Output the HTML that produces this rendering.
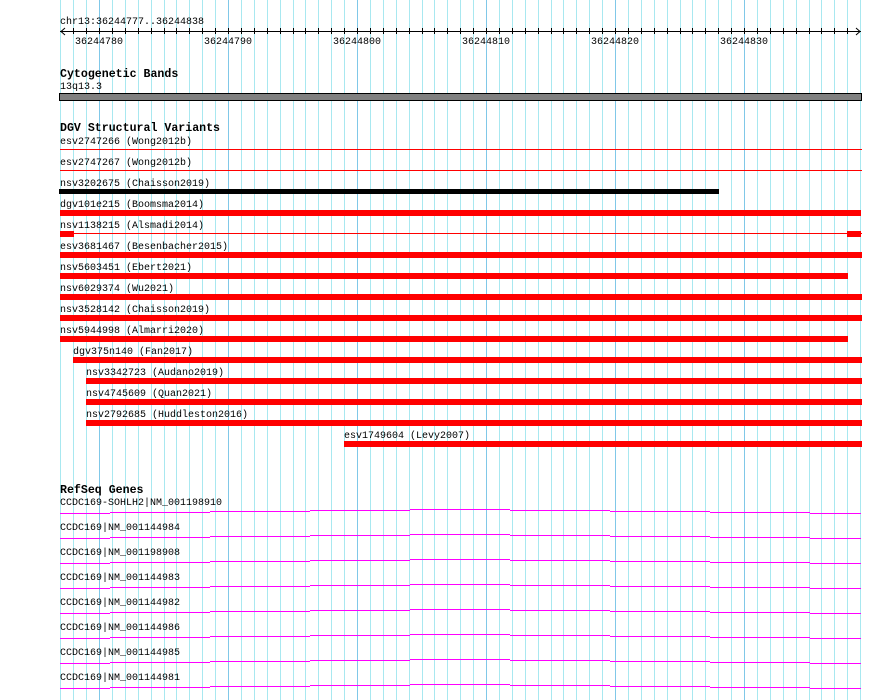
<!DOCTYPE html>
<html><head><meta charset="utf-8"><style>
html,body{margin:0;padding:0;background:#fff;width:890px;height:700px;overflow:hidden}
svg{display:block}
text{font-family:"Liberation Mono",monospace;font-size:10px;fill:#000}
.h{font-weight:bold;font-size:11.6px}
.l{stroke:#a8e8f0}
.d{stroke:#80c8e8}
.t{stroke:#000}
.g{stroke:#ff00ff}
</style></head><body>
<svg width="890" height="700" xmlns="http://www.w3.org/2000/svg">
<g stroke-width="1">
<g class="l">
<line x1="60.5" y1="0" x2="60.5" y2="700"/><line x1="73.5" y1="0" x2="73.5" y2="700"/><line x1="86.5" y1="0" x2="86.5" y2="700"/>
<line x1="112.5" y1="0" x2="112.5" y2="700"/><line x1="125.5" y1="0" x2="125.5" y2="700"/><line x1="138.5" y1="0" x2="138.5" y2="700"/><line x1="151.5" y1="0" x2="151.5" y2="700"/><line x1="164.5" y1="0" x2="164.5" y2="700"/><line x1="176.5" y1="0" x2="176.5" y2="700"/><line x1="189.5" y1="0" x2="189.5" y2="700"/><line x1="202.5" y1="0" x2="202.5" y2="700"/><line x1="215.5" y1="0" x2="215.5" y2="700"/>
<line x1="241.5" y1="0" x2="241.5" y2="700"/><line x1="254.5" y1="0" x2="254.5" y2="700"/><line x1="267.5" y1="0" x2="267.5" y2="700"/><line x1="280.5" y1="0" x2="280.5" y2="700"/><line x1="293.5" y1="0" x2="293.5" y2="700"/><line x1="305.5" y1="0" x2="305.5" y2="700"/><line x1="318.5" y1="0" x2="318.5" y2="700"/><line x1="331.5" y1="0" x2="331.5" y2="700"/><line x1="344.5" y1="0" x2="344.5" y2="700"/>
<line x1="370.5" y1="0" x2="370.5" y2="700"/><line x1="383.5" y1="0" x2="383.5" y2="700"/><line x1="396.5" y1="0" x2="396.5" y2="700"/><line x1="409.5" y1="0" x2="409.5" y2="700"/><line x1="422.5" y1="0" x2="422.5" y2="700"/><line x1="434.5" y1="0" x2="434.5" y2="700"/><line x1="447.5" y1="0" x2="447.5" y2="700"/><line x1="460.5" y1="0" x2="460.5" y2="700"/><line x1="473.5" y1="0" x2="473.5" y2="700"/>
<line x1="499.5" y1="0" x2="499.5" y2="700"/><line x1="512.5" y1="0" x2="512.5" y2="700"/><line x1="525.5" y1="0" x2="525.5" y2="700"/><line x1="538.5" y1="0" x2="538.5" y2="700"/><line x1="551.5" y1="0" x2="551.5" y2="700"/><line x1="563.5" y1="0" x2="563.5" y2="700"/><line x1="576.5" y1="0" x2="576.5" y2="700"/><line x1="589.5" y1="0" x2="589.5" y2="700"/><line x1="602.5" y1="0" x2="602.5" y2="700"/>
<line x1="628.5" y1="0" x2="628.5" y2="700"/><line x1="641.5" y1="0" x2="641.5" y2="700"/><line x1="654.5" y1="0" x2="654.5" y2="700"/><line x1="667.5" y1="0" x2="667.5" y2="700"/><line x1="680.5" y1="0" x2="680.5" y2="700"/><line x1="692.5" y1="0" x2="692.5" y2="700"/><line x1="705.5" y1="0" x2="705.5" y2="700"/><line x1="718.5" y1="0" x2="718.5" y2="700"/><line x1="731.5" y1="0" x2="731.5" y2="700"/>
<line x1="757.5" y1="0" x2="757.5" y2="700"/><line x1="770.5" y1="0" x2="770.5" y2="700"/><line x1="783.5" y1="0" x2="783.5" y2="700"/><line x1="796.5" y1="0" x2="796.5" y2="700"/><line x1="809.5" y1="0" x2="809.5" y2="700"/><line x1="821.5" y1="0" x2="821.5" y2="700"/><line x1="834.5" y1="0" x2="834.5" y2="700"/><line x1="847.5" y1="0" x2="847.5" y2="700"/><line x1="860.5" y1="0" x2="860.5" y2="700"/>
</g>
<g class="d">
<line x1="99.5" y1="0" x2="99.5" y2="700"/><line x1="228.5" y1="0" x2="228.5" y2="700"/><line x1="357.5" y1="0" x2="357.5" y2="700"/><line x1="486.5" y1="0" x2="486.5" y2="700"/><line x1="615.5" y1="0" x2="615.5" y2="700"/><line x1="744.5" y1="0" x2="744.5" y2="700"/>
</g>
<path class="t" fill="none" d="M73.5 28v6M86.5 28v6M99.5 28v6M112.5 28v6M125.5 28v6M138.5 28v6M151.5 28v6M164.5 28v6M176.5 28v6M189.5 28v6M202.5 28v6M215.5 28v6M228.5 28v6M241.5 28v6M254.5 28v6M267.5 28v6M280.5 28v6M293.5 28v6M305.5 28v6M318.5 28v6M331.5 28v6M344.5 28v6M357.5 28v6M370.5 28v6M383.5 28v6M396.5 28v6M409.5 28v6M422.5 28v6M434.5 28v6M447.5 28v6M460.5 28v6M473.5 28v6M486.5 28v6M499.5 28v6M512.5 28v6M525.5 28v6M538.5 28v6M551.5 28v6M563.5 28v6M576.5 28v6M589.5 28v6M602.5 28v6M615.5 28v6M628.5 28v6M641.5 28v6M654.5 28v6M667.5 28v6M680.5 28v6M692.5 28v6M705.5 28v6M718.5 28v6M731.5 28v6M744.5 28v6M757.5 28v6M770.5 28v6M783.5 28v6M796.5 28v6M809.5 28v6M821.5 28v6M834.5 28v6M847.5 28v6"/>
</g>
<!-- ruler -->
<text x="60" y="24">chr13:36244777..36244838</text>
<line x1="60" y1="31.5" x2="861" y2="31.5" stroke="#000"/>
<polyline points="65,28 61,31.5 65,35" fill="none" stroke="#000"/>
<polyline points="856,28 860,31.5 856,35" fill="none" stroke="#000"/>
<text x="75" y="44">36244780</text>
<text x="204" y="44">36244790</text>
<text x="333" y="44">36244800</text>
<text x="462" y="44">36244810</text>
<text x="591" y="44">36244820</text>
<text x="720" y="44">36244830</text>
<!-- cyto -->
<text class="h" x="60" y="77">Cytogenetic Bands</text>
<text x="60" y="89">13q13.3</text>
<rect x="59.5" y="93.5" width="802" height="7" fill="#808080" stroke="#000"/>
<!-- DGV -->
<text class="h" x="60" y="131">DGV Structural Variants</text>
<text x="60" y="144">esv2747266 (Wong2012b)</text>
<rect x="60" y="149" width="802" height="1" fill="#f00"/>
<text x="60" y="165">esv2747267 (Wong2012b)</text>
<rect x="60" y="170" width="802" height="1" fill="#f00"/>
<text x="60" y="186">nsv3202675 (Chaisson2019)</text>
<rect x="59" y="189" width="660" height="5" fill="#000"/>
<text x="60" y="207">dgv101e215 (Boomsma2014)</text>
<rect x="60" y="210" width="801" height="6" fill="#f00"/>
<text x="60" y="228">nsv1138215 (Alsmadi2014)</text>
<rect x="60" y="233" width="802" height="1" fill="#f00"/>
<rect x="60" y="231" width="14" height="6" fill="#f00"/>
<rect x="847" y="231" width="14" height="6" fill="#f00"/>
<text x="60" y="249">esv3681467 (Besenbacher2015)</text>
<rect x="60" y="252" width="802" height="6" fill="#f00"/>
<text x="60" y="270">nsv5603451 (Ebert2021)</text>
<rect x="60" y="273" width="788" height="6" fill="#f00"/>
<text x="60" y="291">nsv6029374 (Wu2021)</text>
<rect x="60" y="294" width="802" height="6" fill="#f00"/>
<text x="60" y="312">nsv3528142 (Chaisson2019)</text>
<rect x="60" y="315" width="802" height="6" fill="#f00"/>
<text x="60" y="333">nsv5944998 (Almarri2020)</text>
<rect x="60" y="336" width="788" height="6" fill="#f00"/>
<text x="73" y="354">dgv375n140 (Fan2017)</text>
<rect x="73" y="357" width="789" height="6" fill="#f00"/>
<text x="86" y="375">nsv3342723 (Audano2019)</text>
<rect x="86" y="378" width="776" height="6" fill="#f00"/>
<text x="86" y="396">nsv4745609 (Quan2021)</text>
<rect x="86" y="399" width="776" height="6" fill="#f00"/>
<text x="86" y="417">nsv2792685 (Huddleston2016)</text>
<rect x="86" y="420" width="776" height="6" fill="#f00"/>
<text x="344" y="438">esv1749604 (Levy2007)</text>
<rect x="344" y="441" width="518" height="6" fill="#f00"/>
<!-- genes -->
<text class="h" x="60" y="493">RefSeq Genes</text>
<text x="60" y="505">CCDC169-SOHLH2|NM_001198910</text>
<text x="60" y="530">CCDC169|NM_001144984</text>
<text x="60" y="555">CCDC169|NM_001198908</text>
<text x="60" y="580">CCDC169|NM_001144983</text>
<text x="60" y="605">CCDC169|NM_001144982</text>
<text x="60" y="630">CCDC169|NM_001144986</text>
<text x="60" y="655">CCDC169|NM_001144985</text>
<text x="60" y="680">CCDC169|NM_001144981</text>
<g class="g" fill="none">
<path d="M60 513.5h50M110 512.5h100M210 511.5h100M310 510.5h100M410 509.5h100M510 510.5h100M610 511.5h100M710 512.5h100M810 513.5h51"/>
<path d="M60 538.5h50M110 537.5h100M210 536.5h100M310 535.5h100M410 534.5h100M510 535.5h100M610 536.5h100M710 537.5h100M810 538.5h51"/>
<path d="M60 563.5h50M110 562.5h100M210 561.5h100M310 560.5h100M410 559.5h100M510 560.5h100M610 561.5h100M710 562.5h100M810 563.5h51"/>
<path d="M60 588.5h50M110 587.5h100M210 586.5h100M310 585.5h100M410 584.5h100M510 585.5h100M610 586.5h100M710 587.5h100M810 588.5h51"/>
<path d="M60 613.5h50M110 612.5h100M210 611.5h100M310 610.5h100M410 609.5h100M510 610.5h100M610 611.5h100M710 612.5h100M810 613.5h51"/>
<path d="M60 638.5h50M110 637.5h100M210 636.5h100M310 635.5h100M410 634.5h100M510 635.5h100M610 636.5h100M710 637.5h100M810 638.5h51"/>
<path d="M60 663.5h50M110 662.5h100M210 661.5h100M310 660.5h100M410 659.5h100M510 660.5h100M610 661.5h100M710 662.5h100M810 663.5h51"/>
<path d="M60 688.5h50M110 687.5h100M210 686.5h100M310 685.5h100M410 684.5h100M510 685.5h100M610 686.5h100M710 687.5h100M810 688.5h51"/>
</g>
</svg>
</body></html>
